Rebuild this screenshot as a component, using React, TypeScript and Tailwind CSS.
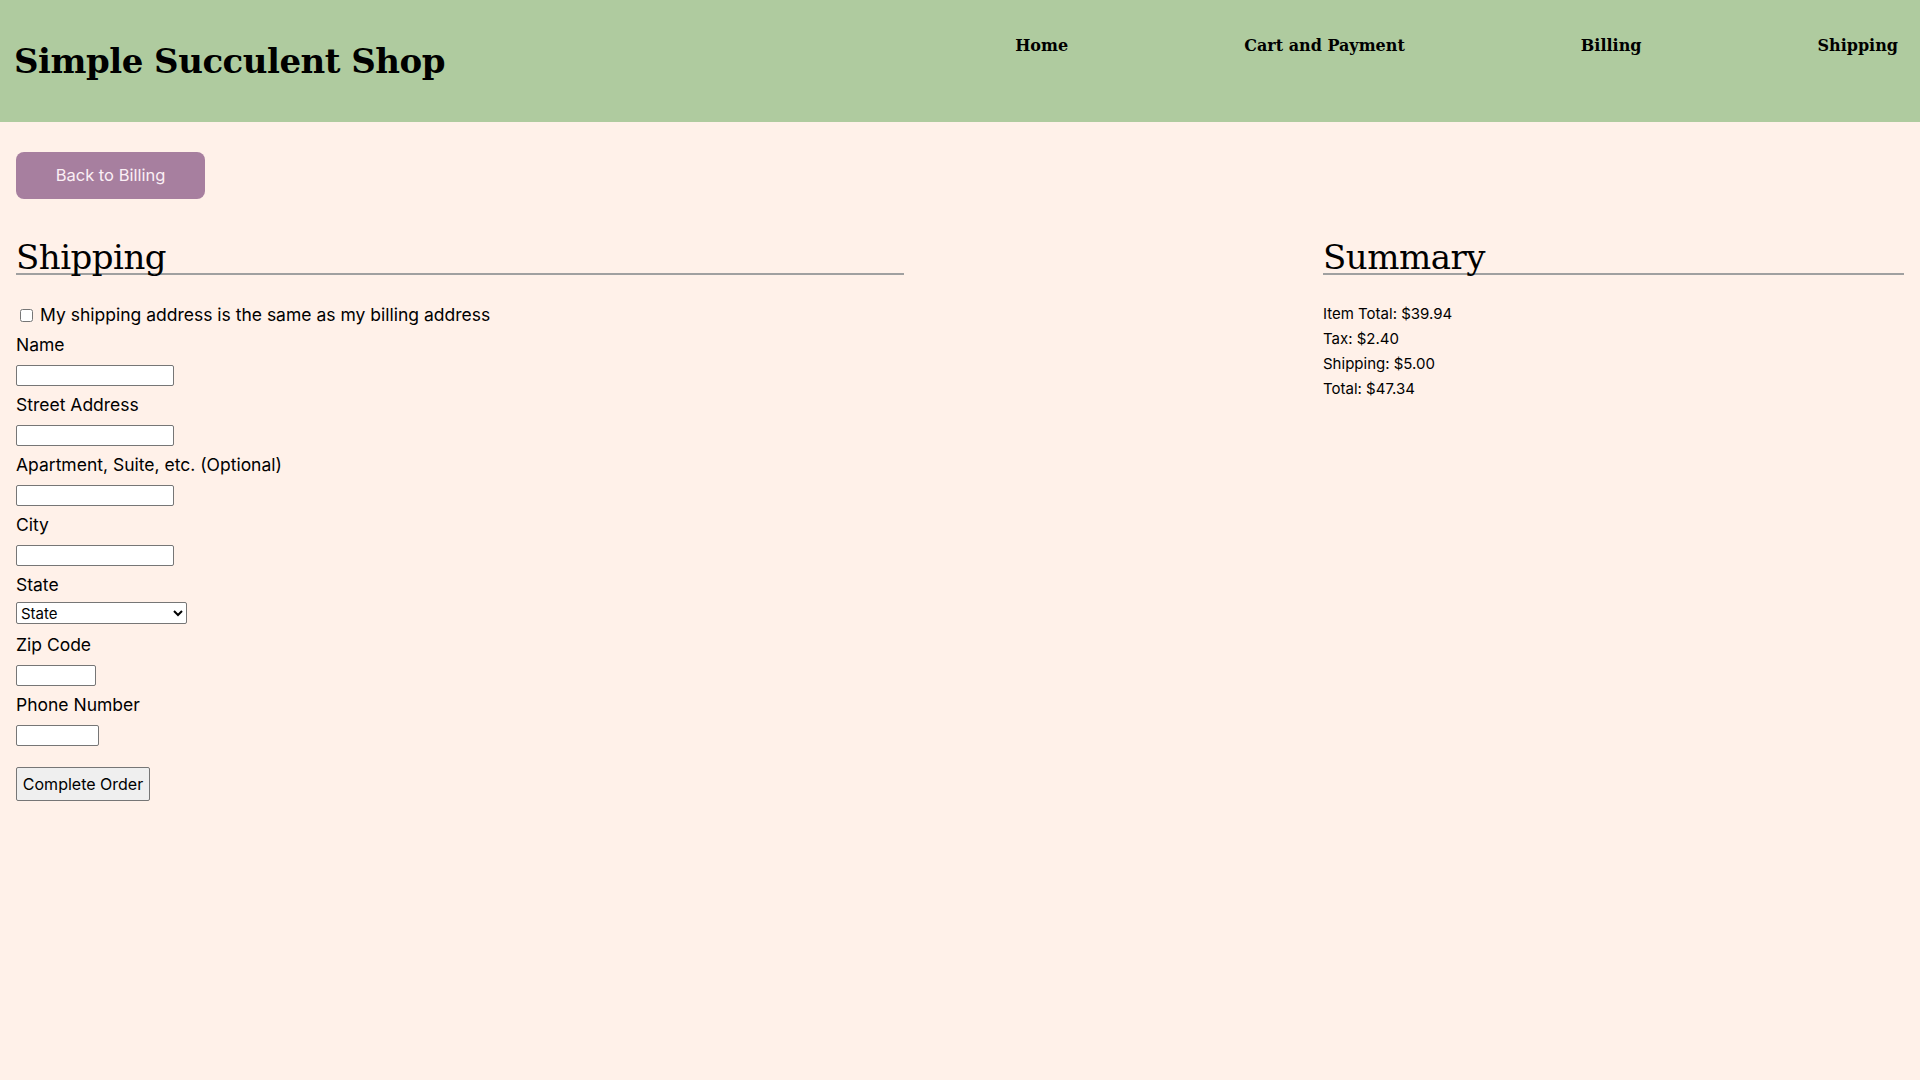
import React from "react";

const serif = { fontFamily: '"DejaVu Serif", serif' };

function Field({ label, width, select }: { label: string; width: string; select?: boolean }) {
  return (
    <div className="flex flex-col h-[60px]">
      <label className="block text-[17.5px] leading-[24px] h-[24px]">{label}</label>
      {select ? (
        <select className={`${width} h-[22px] mt-[5px] border border-[#767676] bg-white text-[15px] rounded-[2px] text-black`}>
          <option>State</option>
        </select>
      ) : (
        <input type="text" className={`${width} h-[21px] mt-[8px] border border-[#767676] bg-white rounded-[2px]`} />
      )}
    </div>
  );
}

export default function App() {
  return (
    <div className="min-h-screen bg-[#fff1e9] text-black" style={{ fontFamily: 'Inter, "Noto Sans", sans-serif' }}>
      <header className="h-[122px] bg-[#afcb9f] flex justify-between items-start">
        <h1 className="ml-[14px] mt-[39px] text-[34px] leading-[44px] font-bold tracking-[-0.5px]" style={serif}>
          Simple Succulent Shop
        </h1>
        <nav className="mt-[34px] mr-[22px]">
          <ul className="flex gap-[176px] text-[16px] leading-[24px] font-bold" style={serif}>
            <li>Home</li>
            <li>Cart and Payment</li>
            <li>Billing</li>
            <li>Shipping</li>
          </ul>
        </nav>
      </header>
      <main className="px-[16px] pt-[30px]">
        <button className="w-[189px] h-[47px] rounded-[8px] bg-[#a77f9f] text-[#fbeff5] text-[16.5px]">
          Back to Billing
        </button>
        <div className="flex justify-between mt-[42px]">
          <section className="w-[888px]">
            <h2 className="text-[34px] leading-[32px] h-[34px] tracking-[-0.5px] border-b-2 border-[#a0a0a0]" style={serif}>
              Shipping
            </h2>
            <div className="mt-[28px] flex items-center h-[24px] text-[17.5px]">
              <input type="checkbox" className="w-[13px] h-[13px] ml-[4px] mr-[7px]" />
              <span>My shipping address is the same as my billing address</span>
            </div>
            <div className="mt-[6px]">
              <Field label="Name" width="w-[158px]" />
              <Field label="Street Address" width="w-[158px]" />
              <Field label="Apartment, Suite, etc. (Optional)" width="w-[158px]" />
              <Field label="City" width="w-[158px]" />
              <Field label="State" width="w-[171px]" select />
              <Field label="Zip Code" width="w-[80px]" />
              <Field label="Phone Number" width="w-[83px]" />
            </div>
            <button className="mt-[14px] w-[134px] h-[34px] border border-[#767676] rounded-[2px] bg-[#efefef] text-[16px]">
              Complete Order
            </button>
          </section>
          <section className="w-[581px]">
            <h2 className="text-[34px] leading-[32px] h-[34px] tracking-[-0.5px] border-b-2 border-[#a0a0a0]" style={serif}>
              Summary
            </h2>
            <div className="mt-[26px] text-[15px] leading-[25px]">
              <p>Item Total: $39.94</p>
              <p>Tax: $2.40</p>
              <p>Shipping: $5.00</p>
              <p>Total: $47.34</p>
            </div>
          </section>
        </div>
      </main>
    </div>
  );
}
